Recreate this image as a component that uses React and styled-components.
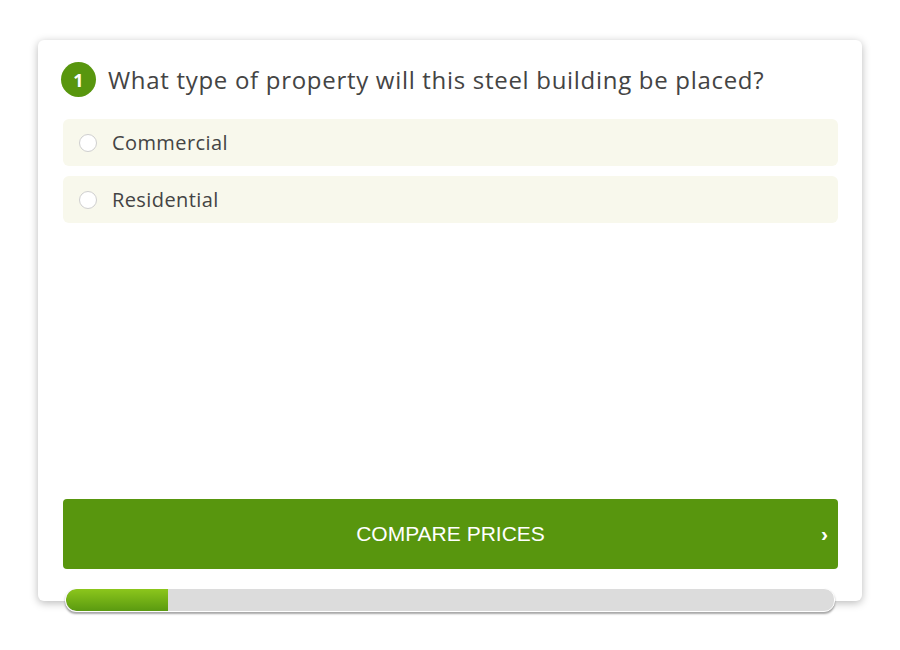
import React from "react";
import styled, { createGlobalStyle } from "styled-components";

const GlobalStyle = createGlobalStyle`
  body {
    margin: 0;
    background: #fff;
    font-family: "Open Sans", "Noto Sans", sans-serif;
  }
`;

const options = ["Commercial", "Residential"];

const Page = styled.div`
  width: 900px;
  height: 650px;
  padding: 40px 38px 0;
  box-sizing: border-box;
`;

const Card = styled.div`
  height: 561px;
  background: #fff;
  border-radius: 6px;
  box-shadow: 0 2px 8px rgba(0, 0, 0, 0.28);
  padding: 22px 24px 32px 25px;
  box-sizing: border-box;
  display: flex;
  flex-direction: column;
`;

const Question = styled.div`
  display: flex;
  align-items: center;
  gap: 12px;
  margin-bottom: 22px;
`;

const Badge = styled.div`
  width: 35px;
  height: 35px;
  border-radius: 50%;
  background: #58960e;
  color: #fff;
  font-weight: 700;
  font-size: 18px;
  display: flex;
  align-items: center;
  justify-content: center;
  margin-left: -2px;
`;

const Title = styled.h2`
  margin: 0;
  font-size: 24px;
  font-weight: 400;
  color: #444;
  letter-spacing: 0.7px;
`;

const OptionList = styled.div`
  display: flex;
  flex-direction: column;
  gap: 10px;
  flex: 1;
`;

const Option = styled.label`
  display: flex;
  align-items: center;
  gap: 15px;
  height: 47px;
  padding: 0 16px;
  background: #f8f8ec;
  border-radius: 6px;
  font-size: 20px;
  color: #444;
  letter-spacing: 0.4px;
  cursor: pointer;
`;

const Radio = styled.span`
  width: 16px;
  height: 16px;
  border-radius: 50%;
  background: #fff;
  border: 1px solid #cfcfcf;
`;

const Button = styled.button`
  position: relative;
  height: 70px;
  border: none;
  border-radius: 4px;
  background: #58960e;
  color: #fff;
  font-family: "Liberation Sans", Arial, sans-serif;
  font-size: 21px;
  cursor: pointer;
`;

const Chevron = styled.span`
  position: absolute;
  right: 10px;
  top: 23px;
  font-size: 21px;
  font-weight: 700;
`;

const Progress = styled.div`
  position: relative;
  margin: -13px 27px 0 27px;
  height: 22px;
  border-radius: 11px;
  background: #dcdcdc;
  border: 1px solid #fff;
  box-shadow: 0 2px 2px rgba(0, 0, 0, 0.35);
  overflow: hidden;
`;

const Fill = styled.div`
  height: 100%;
  background: linear-gradient(#8cc61c, #5a9a10);
  border-radius: 11px 0 0 11px;
`;

export default function App() {
  const progress = 13.3;
  return (
    <>
      <GlobalStyle />
      <Page>
        <Card>
          <Question>
            <Badge>1</Badge>
            <Title>What type of property will this steel building be placed?</Title>
          </Question>
          <OptionList>
            {options.map(o => (
              <Option key={o}>
                <Radio />
                {o}
              </Option>
            ))}
          </OptionList>
          <Button>
            COMPARE PRICES
            <Chevron>›</Chevron>
          </Button>
        </Card>
        <Progress>
          <Fill style={{ width: `${progress}%` }} />
        </Progress>
      </Page>
    </>
  );
}
